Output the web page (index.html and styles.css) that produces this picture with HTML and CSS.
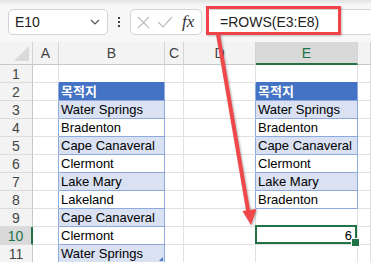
FILE: index.html
```html
<!DOCTYPE html>
<html lang="ko">
<head>
  <meta charset="UTF-8" />
  <title>ROWS 함수</title>
  <link rel="stylesheet" href="styles.css">
</head>
<body>

  <!-- Строка формул -->
  <div class="toolbar">
    <div class="namebox">
      <span>E10</span>
      <svg width="10" height="6" viewBox="0 0 10 6"><polyline points="1,1 5,5 9,1" fill="none" stroke="#555" stroke-width="1.2"/></svg>
    </div>
    <div class="dots"><i></i><i></i><i></i></div>
    <div class="editbox">
      <svg width="13" height="13" viewBox="0 0 13 13"><path d="M1 1 L12 12 M12 1 L1 12" stroke="#bdbdbd" stroke-width="1.2"/></svg>
      <svg width="16" height="12" viewBox="0 0 16 12"><polyline points="1,6 6,11 15,1" fill="none" stroke="#bdbdbd" stroke-width="1.2"/></svg>
      <span class="fx">fx</span>
    </div>
    <div class="formula">
      <span>=ROWS(E3:E8)</span>
      <div class="highlight"></div>
    </div>
  </div>

  <!-- Лист -->
  <div class="sheet">
    <div class="row head">
      <div class="corner"></div>
      <div class="col">A</div>
      <div class="col">B</div>
      <div class="col">C</div>
      <div class="col">D</div>
      <div class="col active">E</div>
      <div class="col"></div>
    </div>
    <div class="row">
      <div class="num">1</div><div class="cell"></div><div class="cell top"></div><div class="cell"></div><div class="cell"></div><div class="cell top"></div><div class="cell"></div>
    </div>
    <div class="row">
      <div class="num">2</div><div class="cell edge"></div><div class="cell t th">목적지</div><div class="cell"></div><div class="cell edge"></div><div class="cell t th">목적지</div><div class="cell"></div>
    </div>
    <div class="row">
      <div class="num">3</div><div class="cell edge"></div><div class="cell t band">Water Springs</div><div class="cell"></div><div class="cell edge"></div><div class="cell t band">Water Springs</div><div class="cell"></div>
    </div>
    <div class="row">
      <div class="num">4</div><div class="cell edge"></div><div class="cell t">Bradenton</div><div class="cell"></div><div class="cell edge"></div><div class="cell t">Bradenton</div><div class="cell"></div>
    </div>
    <div class="row">
      <div class="num">5</div><div class="cell edge"></div><div class="cell t band">Cape Canaveral</div><div class="cell"></div><div class="cell edge"></div><div class="cell t band">Cape Canaveral</div><div class="cell"></div>
    </div>
    <div class="row">
      <div class="num">6</div><div class="cell edge"></div><div class="cell t">Clermont</div><div class="cell"></div><div class="cell edge"></div><div class="cell t">Clermont</div><div class="cell"></div>
    </div>
    <div class="row">
      <div class="num">7</div><div class="cell edge"></div><div class="cell t band">Lake Mary</div><div class="cell"></div><div class="cell edge"></div><div class="cell t band">Lake Mary</div><div class="cell"></div>
    </div>
    <div class="row">
      <div class="num">8</div><div class="cell edge"></div><div class="cell t">Lakeland</div><div class="cell"></div><div class="cell edge"></div><div class="cell t">Bradenton</div><div class="cell"></div>
    </div>
    <div class="row">
      <div class="num">9</div><div class="cell edge"></div><div class="cell t band">Cape Canaveral</div><div class="cell"></div><div class="cell"></div><div class="cell"></div><div class="cell"></div>
    </div>
    <div class="row">
      <div class="num active">10</div><div class="cell edge"></div><div class="cell t">Clermont</div><div class="cell"></div><div class="cell"></div><div class="cell value selected">6</div><div class="cell"></div>
    </div>
    <div class="row">
      <div class="num">11</div><div class="cell edge"></div><div class="cell t band last">Water Springs</div><div class="cell"></div><div class="cell"></div><div class="cell"></div><div class="cell"></div>
    </div>
  </div>

  <!-- Стрелка поверх листа -->
  <svg class="arrow" width="371" height="262" viewBox="0 0 371 262">
    <line x1="218" y1="34" x2="248.5" y2="213" stroke="#f0474a" stroke-width="4"/>
    <polygon points="242.5,211 256.5,209 251,225" fill="#f0474a"/>
  </svg>

</body>
</html>
```

FILE: styles.css
```css
:root {
  --grid-line: #e1e1e1;
  --header-bg: #f3f3f3;
  --header-active: #d9d9d9;
  --excel-green: #217346;
  --table-blue: #4472c4;
  --table-line: #8ea9db;
  --table-band: #d9e1f2;
}

* {
  box-sizing: border-box;
}

body {
  margin: 0;
  width: 371px;
  height: 262px;
  overflow: hidden;
  position: relative;
  font-family: 'Liberation Sans', 'Noto Sans CJK KR', sans-serif;
  font-size: 13px;
  color: #000;
  background: #fff;
}

.toolbar {
  height: 42px;
  display: flex;
  align-items: flex-start;
  padding: 9px 0 0 8px;
  background: linear-gradient(#e2e2e2, #f7f7f7 5px);
}

.namebox {
  width: 100px;
  height: 26px;
  display: flex;
  align-items: center;
  justify-content: space-between;
  padding: 0 7px 0 6px;
  background: #fff;
  border: 1px solid #d3d3d3;
  border-radius: 5px;
  font-size: 14px;
  color: #222;
}

.dots {
  width: 22px;
  height: 26px;
  display: flex;
  flex-direction: column;
  align-items: center;
  justify-content: center;
  gap: 2px;
}

.dots i {
  width: 2px;
  height: 2px;
  background: #444;
}

.editbox {
  width: 72px;
  height: 26px;
  display: flex;
  align-items: center;
  gap: 7px;
  padding-left: 6px;
  background: #fff;
  border: 1px solid #d3d3d3;
  border-radius: 5px;
}

.fx {
  font-family: 'Liberation Serif', serif;
  font-style: italic;
  font-size: 17px;
  color: #333;
  margin-left: 2px;
}

.formula {
  position: relative;
  flex: 1;
  height: 26px;
  margin-left: 5px;
  display: flex;
  align-items: center;
  padding-left: 12px;
  background: #fff;
  border: 1px solid #d3d3d3;
  border-right: none;
  border-radius: 5px 0 0 5px;
  font-size: 14px;
  color: #222;
}

.highlight {
  position: absolute;
  left: -2px;
  top: -4px;
  width: 135px;
  height: 29px;
  border: 3px solid #f0444a;
  box-shadow: 1px 1px 2px rgba(0, 0, 0, 0.25);
}

/* Сетка листа */
.row {
  display: grid;
  grid-template-columns: 33px 26px 106px 19px 72px 102px 1fr;
  height: 18px;
}

.row.head {
  height: 23px;
}

.corner,
.col,
.num {
  background: var(--header-bg);
  color: #444;
  display: flex;
  align-items: center;
  justify-content: center;
  border-right: 1px solid #d4d4d4;
  border-bottom: 1px solid #c8c8c8;
}

.col {
  font-size: 14px;
}

.corner {
  position: relative;
}

.corner::after {
  content: "";
  position: absolute;
  right: 3px;
  bottom: 3px;
  border-left: 15px solid transparent;
  border-bottom: 15px solid #dadada;
}

.num {
  font-size: 14px;
  border-bottom-color: #dcdcdc;
  border-right-color: #c8c8c8;
}

.col.active {
  background: var(--header-active);
  color: var(--excel-green);
  border-bottom: 2px solid var(--excel-green);
}

.num.active {
  background: var(--header-active);
  color: var(--excel-green);
  border-right: 2px solid var(--excel-green);
}

.cell {
  border-right: 1px solid var(--grid-line);
  border-bottom: 1px solid var(--grid-line);
  padding-left: 2px;
  line-height: 17px;
  white-space: nowrap;
  overflow: hidden;
}

.cell.top {
  border-bottom-color: var(--table-blue);
}

.cell.edge {
  border-right-color: var(--table-line);
}

.cell.t {
  border-right-color: var(--table-line);
  border-bottom-color: var(--table-line);
}

.cell.th {
  background: var(--table-blue);
  color: #fff;
  font-weight: bold;
}

.cell.band {
  background: var(--table-band);
}

.cell.last {
  position: relative;
}

.cell.last::after {
  content: "";
  position: absolute;
  right: 1px;
  bottom: 1px;
  border-left: 4px solid transparent;
  border-bottom: 4px solid var(--table-blue);
}

.cell.value {
  text-align: right;
  padding-right: 5px;
}

.cell.selected {
  position: relative;
  overflow: visible;
}

.cell.selected::before {
  content: "";
  position: absolute;
  left: -1px;
  top: -2px;
  right: 0;
  bottom: 0;
  border: 2px solid var(--excel-green);
}

.cell.selected::after {
  content: "";
  position: absolute;
  right: -3px;
  bottom: -3px;
  width: 7px;
  height: 7px;
  background: var(--excel-green);
  border: 1px solid #fff;
}

.arrow {
  position: absolute;
  left: 0;
  top: 0;
  pointer-events: none;
  filter: drop-shadow(1px 1px 1px rgba(0, 0, 0, 0.3));
}
```
